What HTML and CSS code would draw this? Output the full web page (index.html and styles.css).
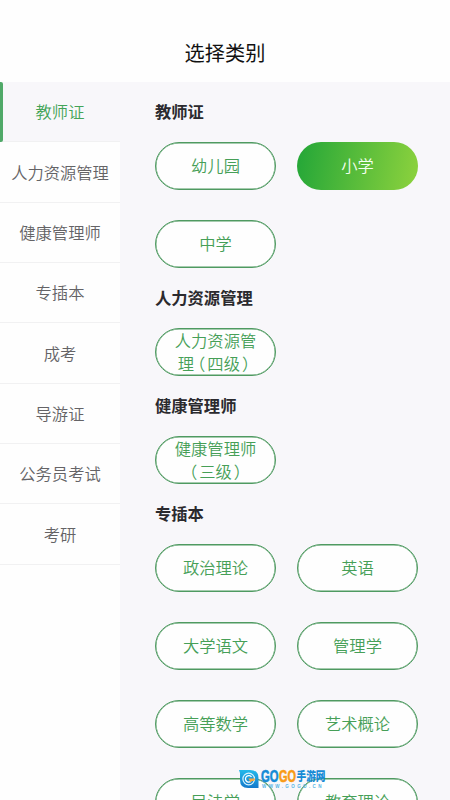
FILE: index.html
```
<!DOCTYPE html>
<html lang="zh-CN">
<head>
<meta charset="utf-8">
<title>选择类别</title>
<link rel="stylesheet" href="styles.css">
</head>
<body>
<div class="screen">
  <header class="header"><h1>选择类别</h1></header>
  <div class="body">
    <nav class="sidebar">
      <a class="tab active">教师证</a>
      <a class="tab">人力资源管理</a>
      <a class="tab">健康管理师</a>
      <a class="tab">专插本</a>
      <a class="tab">成考</a>
      <a class="tab">导游证</a>
      <a class="tab">公务员考试</a>
      <a class="tab">考研</a>
    </nav>
    <main class="content">
      <h2>教师证</h2>
      <div class="options">
        <button class="pill">幼儿园</button>
        <button class="pill selected">小学</button>
        <button class="pill">中学</button>
      </div>
      <h2>人力资源管理</h2>
      <div class="options">
        <button class="pill double">人力资源管<br>理<span class="open">（</span>四级<span class="close">）</span></button>
      </div>
      <h2>健康管理师</h2>
      <div class="options">
        <button class="pill double">健康管理师<br><span class="open">（</span>三级<span class="close">）</span></button>
      </div>
      <h2>专插本</h2>
      <div class="options">
        <button class="pill">政治理论</button>
        <button class="pill">英语</button>
        <button class="pill">大学语文</button>
        <button class="pill">管理学</button>
        <button class="pill">高等数学</button>
        <button class="pill">艺术概论</button>
        <button class="pill">民法学</button>
        <button class="pill">教育理论</button>
      </div>
    </main>
  </div>
  <div class="watermark">
    <svg class="mark" viewBox="0 0 20 20">
      <defs><linearGradient id="blue" x1="0" y1="0" x2="0" y2="1"><stop offset="0" stop-color="#24b9ea"/><stop offset="1" stop-color="#1479cb"/></linearGradient></defs>
      <path d="M0 1H11Q19.500 1 19.500 9V19H9Q1 19 1 11V4Z" fill="url(#blue)"/>
      <circle cx="9.700" cy="10" r="5.800" fill="none" stroke="#d9f3ff" stroke-width="1.200"/>
      <path d="M12.500 8A3.300 3.300 0 1 0 12 12.300" fill="none" stroke="#fff" stroke-width="1.300"/>
      <path d="M9.500 9.500H16.500L15 12H13L11.500 13.500Z" fill="#f3a843"/>
    </svg>
    <div class="brand">
      <svg class="wordmark" viewBox="0 0 65 15">
        <text class="latin" x="0" y="13.300" textLength="17.500" lengthAdjust="spacingAndGlyphs" fill="#168bd6" stroke="#168bd6">GO</text>
        <text class="latin" x="18" y="13.300" textLength="17" lengthAdjust="spacingAndGlyphs" fill="#f89b16" stroke="#f89b16">GO</text>
        <text class="han" x="35.500" y="12" textLength="29" lengthAdjust="spacingAndGlyphs" fill="#168bd6">手游网</text>
      </svg>
      <span class="url">WWW.GOGO.CN</span>
    </div>
  </div>
</div>
</body>
</html>
```
FILE: styles.css
```
* { box-sizing: border-box; }
body {
  margin: 0;
  overflow: hidden;
  font-family: "Noto Sans CJK SC", sans-serif;
}
.screen {
  position: relative;
  display: flex;
  flex-direction: column;
  width: 450px;
  height: 800px;
  overflow: hidden;
  background: #fefefe;
}
.header {
  flex: none;
  height: 82px;
  padding-top: 24px;
  background: #fefefe;
}
h1 {
  margin: 0;
  font-size: 20.2px;
  font-weight: 400;
  line-height: 57px;
  text-align: center;
  color: #111;
}
.body {
  display: flex;
  flex: 1;
  min-height: 0;
}
.sidebar {
  flex: none;
  width: 120px;
}
.tab {
  display: flex;
  align-items: center;
  justify-content: center;
  height: 60.35px;
  padding-bottom: 1px;
  border-bottom: 1px solid #f1f1f2;
  font-size: 16.3px;
  font-weight: 350;
  color: #646366;
}
.tab.active {
  position: relative;
  padding-bottom: 2px;
  background: #f8f7fa;
  color: #43a457;
}
.tab.active::before {
  content: "";
  position: absolute;
  left: 0;
  top: 0;
  width: 3px;
  height: 60px;
  border-radius: 0 2px 2px 0;
  background: #50a968;
}
.content {
  flex: 1;
  padding-left: 35px;
  background: #f8f7fa;
}
h2 {
  height: 60px;
  margin: 0;
  font-size: 16.3px;
  font-weight: 700;
  line-height: 58px;
  color: #2b2a2e;
}
.options {
  display: grid;
  grid-template-columns: 121px 121px;
  gap: 30px 21px;
}
.pill {
  display: block;
  height: 48px;
  padding: 0 0 2px;
  border: 1px solid #4f9a61;
  border-radius: 24px;
  box-shadow: inset 0 0 0 0.4px #4f9a61;
  background: #fefefe;
  font: 350 16.3px/44px "Noto Sans CJK SC", sans-serif;
  white-space: nowrap;
  color: #469f57;
}
.pill.double {
  padding-bottom: 1px;
  line-height: 22.5px;
}
.pill.selected {
  border: 0;
  box-shadow: none;
  background: linear-gradient(100deg, #28a838 5%, #88d03d 95%);
  color: #f4fff0;
}
.open { margin: 0 2px 0 -5px; }
.close { margin: 0 -5px 0 2px; }
.watermark {
  position: absolute;
  left: 239px;
  top: 769px;
  display: flex;
  gap: 2px;
}
.mark { width: 20px; height: 20px; }
.brand {
  display: flex;
  flex-direction: column;
  width: 65px;
}
.wordmark { width: 65px; height: 15px; overflow: visible; }
.latin { font: 700 16px "Liberation Sans", sans-serif; stroke-width: 0.6px; }
.han { font: 900 12px "Noto Sans CJK SC", sans-serif; }
.url {
  padding-left: 1px;
  font: 700 4.5px/5px "Liberation Sans", sans-serif;
  letter-spacing: 2.4px;
  white-space: nowrap;
  color: #54b4e4;
}
```
